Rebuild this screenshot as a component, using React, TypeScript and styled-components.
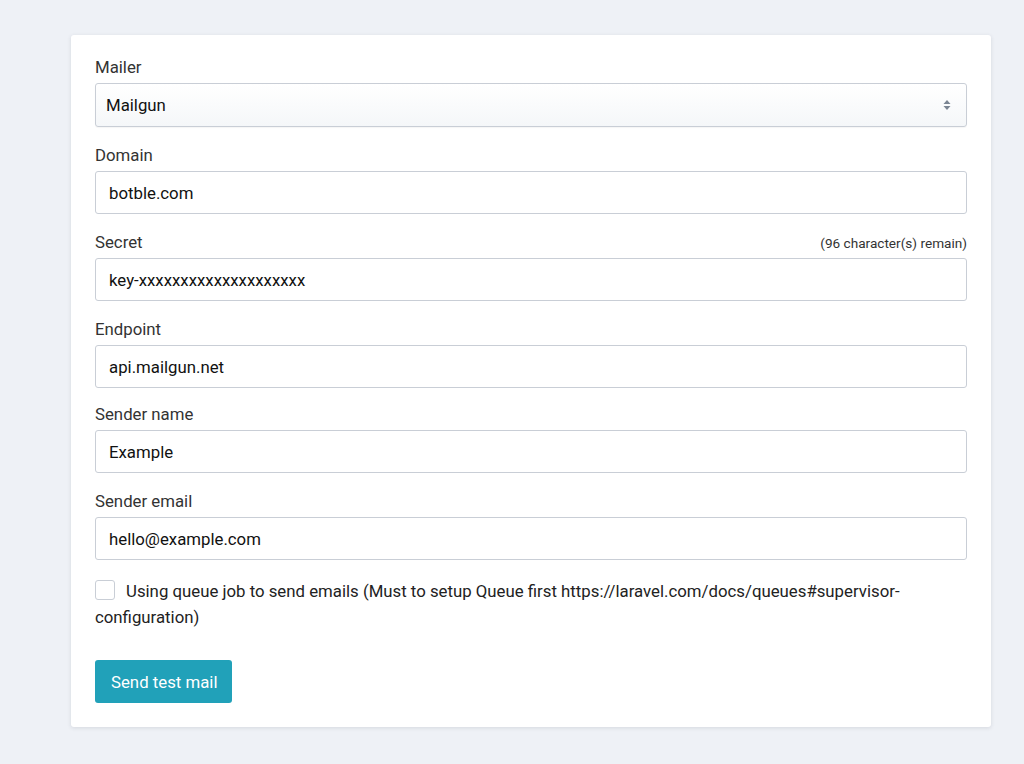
import React from 'react'
import styled, { createGlobalStyle } from 'styled-components'

const GlobalStyle = createGlobalStyle`
  html, body {
    margin: 0;
    padding: 0;
    background: #eef1f6;
    font-family: Roboto, "Liberation Sans", sans-serif;
    color: #222;
  }
  * { box-sizing: border-box; }
`

const Page = styled.div`
  padding: 35px 33px 36px 71px;
`

const Card = styled.div`
  background: #fff;
  border-radius: 3px;
  box-shadow: 0 1px 4px rgba(30, 40, 60, 0.12);
  padding: 20px 24px 24px 24px;
`

const Group = styled.div<{ $gap?: number }>`
  margin-bottom: ${(p) => p.$gap ?? 16}px;
`

const LabelRow = styled.div`
  display: flex;
  justify-content: space-between;
  align-items: baseline;
  margin-bottom: 4px;
`

const Label = styled.label`
  font-size: 16.8px;
  line-height: 24px;
  color: #333;
`

const Counter = styled.span`
  font-size: 13.6px;
  color: #333;
`

const Input = styled.input`
  display: block;
  width: 100%;
  height: 43px;
  padding: 0 13px;
  font-family: inherit;
  font-size: 16.8px;
  color: #111;
  border: 1px solid #c9ced6;
  border-radius: 3px;
  background: #fff;
  outline: none;
`

const SelectBox = styled.div`
  height: 44px;
  border: 1px solid #c9ced6;
  border-radius: 3px;
  background: linear-gradient(#ffffff, #f5f7f9);
  box-shadow: 0 1px 1px rgba(0, 0, 0, 0.04);
  display: flex;
  align-items: center;
  justify-content: space-between;
  padding: 0 15px 0 10px;
  font-size: 16.8px;
  color: #111;
`

const CheckRow = styled.div`
  margin-top: 18px;
  font-size: 16.8px;
  line-height: 26px;
  color: #222;
`

const CheckText = styled.span`
  &::before {
    content: '';
    display: inline-block;
    width: 18px;
    height: 18px;
    margin-right: 11px;
    vertical-align: -3px;
    border: 1px solid #c9ced6;
    border-radius: 3px;
    background: #fff;
  }
`

const Button = styled.button`
  margin-top: 30px;
  height: 43px;
  padding: 0 15px 0 16px;
  background: #21a1b9;
  color: #fff;
  border: none;
  border-radius: 3px;
  font-family: inherit;
  font-size: 16.8px;
  cursor: pointer;
`

const Arrows = () => (
  <svg width="8" height="12" viewBox="0 0 8 12">
    <path d="M4 1 L7.5 5 H0.5 Z" fill="#7a8593" />
    <path d="M4 11 L7.5 7 H0.5 Z" fill="#7a8593" />
  </svg>
)

const fields = [
  { label: 'Domain', value: 'botble.com' },
  { label: 'Secret', value: 'key-xxxxxxxxxxxxxxxxxxxx', counter: '(96 character(s) remain)' },
  { label: 'Endpoint', value: 'api.mailgun.net', gap: 14 },
  { label: 'Sender name', value: 'Example' },
  { label: 'Sender email', value: 'hello@example.com' },
]

const App = () => {
  return (
    <Page>
      <GlobalStyle />
      <Card>
        <Group>
          <LabelRow>
            <Label>Mailer</Label>
          </LabelRow>
          <SelectBox>
            <span>Mailgun</span>
            <Arrows />
          </SelectBox>
        </Group>
        {fields.map((f) => (
          <Group key={f.label} $gap={f.gap}>
            <LabelRow>
              <Label>{f.label}</Label>
              {f.counter && <Counter>{f.counter}</Counter>}
            </LabelRow>
            <Input defaultValue={f.value} />
          </Group>
        ))}
        <CheckRow>
          <CheckText>
            Using queue job to send emails (Must to setup Queue first https://laravel.com/docs/queues#supervisor-configuration)
          </CheckText>
        </CheckRow>
        <Button>Send test mail</Button>
      </Card>
    </Page>
  )
}

export default App
